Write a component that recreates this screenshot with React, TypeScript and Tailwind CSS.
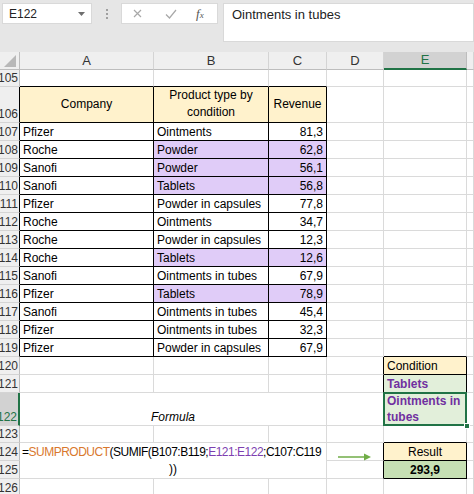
import type { ReactNode } from 'react'

type V = 'end' | 'center'
type H = 'start' | 'center' | 'end'

const vCls: Record<V, string> = { end: 'items-end', center: 'items-center' }
const hCls: Record<H, string> = { start: 'justify-start', center: 'justify-center', end: 'justify-end' }

function Cell({
  r,
  b,
  v = 'end',
  h = 'start',
  cls = '',
  children,
}: {
  r?: boolean
  b?: boolean
  v?: V
  h?: H
  cls?: string
  children?: ReactNode
}) {
  const rc = r ? 'border-r-black' : 'border-r-[#dadada]'
  const bc = b ? 'border-b-black' : 'border-b-[#dadada]'
  return (
    <div
      className={`flex min-w-0 overflow-hidden whitespace-nowrap border-r border-b px-[3px] pb-px text-[12px] leading-[14px] ${rc} ${bc} ${vCls[v]} ${hCls[h]} ${cls}`}
    >
      {children}
    </div>
  )
}

function RowHead({ n, dark, sel }: { n: number; dark?: boolean; sel?: boolean }) {
  const rc = sel
    ? 'border-r-2 border-r-[#217346]'
    : dark
      ? 'border-r border-r-black'
      : 'border-r border-r-[#bdbdbd]'
  const bg = sel ? 'bg-[#d2d2d2] text-[#217346]' : 'bg-[#efefef] text-[#333]'
  return (
    <div
      className={`flex items-end justify-end overflow-hidden border-b border-b-[#d4d4d4] pr-px pb-px text-[12px] leading-[14px] ${rc} ${bg}`}
    >
      <span>{n}</span>
    </div>
  )
}

function ColHead({ label, sel }: { label: string; sel?: boolean }) {
  return sel ? (
    <div className="flex items-center justify-center border-r border-r-[#bdbdbd] border-b-2 border-b-[#217346] bg-[#d2d2d2] text-[13px] text-[#217346]">
      {label}
    </div>
  ) : (
    <div className="flex items-center justify-center border-r border-b border-r-[#d4d4d4] border-b-[#bdbdbd] bg-[#efefef] text-[13px] text-[#333]">
      {label}
    </div>
  )
}

const rows: [number, string, string, string, boolean][] = [
  [107, 'Pfizer', 'Ointments', '81,3', false],
  [108, 'Roche', 'Powder', '62,8', true],
  [109, 'Sanofi', 'Powder', '56,1', true],
  [110, 'Sanofi', 'Tablets', '56,8', true],
  [111, 'Pfizer', 'Powder in capsules', '77,8', false],
  [112, 'Roche', 'Ointments', '34,7', false],
  [113, 'Roche', 'Powder in capsules', '12,3', false],
  [114, 'Roche', 'Tablets', '12,6', true],
  [115, 'Sanofi', 'Ointments in tubes', '67,9', false],
  [116, 'Pfizer', 'Tablets', '78,9', true],
  [117, 'Sanofi', 'Ointments in tubes', '45,4', false],
  [118, 'Pfizer', 'Ointments in tubes', '32,3', false],
  [119, 'Pfizer', 'Powder in capsules', '67,9', false],
]

function Toolbar() {
  return (
    <div className="flex h-[52px] items-start bg-[#e6e6e6] pt-[3px] pl-[2px]">
      <div className="relative flex h-[21px] w-[90px] items-center border border-[#d9d9d9] bg-white pl-[6px] text-[12px] text-[#222]">
        E122
        <svg className="absolute top-[8px] right-[6px]" width="7" height="4" viewBox="0 0 7 4">
          <polygon points="0,0 7,0 3.5,4" fill="#6e6e6e" />
        </svg>
      </div>
      <div className="flex h-[21px] w-[29px] flex-col items-center justify-center gap-[2px]">
        <span className="h-[2px] w-[2px] bg-[#a0a0a0]" />
        <span className="h-[2px] w-[2px] bg-[#a0a0a0]" />
        <span className="h-[2px] w-[2px] bg-[#a0a0a0]" />
      </div>
      <div className="flex h-[21px] w-[97px] items-center border border-[#d9d9d9] bg-white">
        <svg className="ml-[11px]" width="9" height="9" viewBox="0 0 9 9">
          <path d="M1 1 L8 8 M8 1 L1 8" stroke="#a8a8a8" strokeWidth="1.2" fill="none" />
        </svg>
        <svg className="ml-[23px]" width="12" height="10" viewBox="0 0 12 10">
          <path d="M1 5.5 L4.5 9 L11 1" stroke="#a8a8a8" strokeWidth="1.2" fill="none" />
        </svg>
        <span className="ml-[19px] font-['Liberation_Serif',serif] text-[13px] text-[#555] italic">
          f<span className="text-[9px]">x</span>
        </span>
      </div>
      <div className="ml-[5px] h-[39px] flex-1 border border-[#d9d9d9] bg-white pt-[3px] pl-[8px] text-[13px] leading-[16px] text-[#222]">
        Ointments in tubes
      </div>
    </div>
  )
}

export default function App() {
  return (
    <div className="h-[494px] w-[474px] overflow-hidden bg-white font-['Liberation_Sans',Arial,sans-serif] text-black">
      <Toolbar />
      <div className="grid grid-cols-[20px_134px_115px_58px_57px_83px_1fr] grid-rows-[18px_17px_36px_repeat(13,18px)_18px_18px_33px_17px_18px_18px_18px]">
        {/* column headers */}
        <div className="relative border-r border-b border-r-[#bdbdbd] border-b-[#bdbdbd] bg-[#efefef]">
          <svg className="absolute right-[3px] bottom-[2px]" width="12" height="12" viewBox="0 0 12 12">
            <polygon points="12,0 12,12 0,12" fill="#b8b8b8" />
          </svg>
        </div>
        <ColHead label="A" />
        <ColHead label="B" />
        <ColHead label="C" />
        <ColHead label="D" />
        <ColHead label="E" sel />
        <ColHead label="" />

        {/* 105 */}
        <RowHead n={105} />
        <Cell b />
        <Cell b />
        <Cell b />
        <Cell />
        <Cell />
        <Cell />

        {/* 106 */}
        <RowHead n={106} dark />
        <Cell r b v="center" h="center" cls="bg-[#fff2cc]">
          Company
        </Cell>
        <Cell r b v="center" h="center" cls="flex-col bg-[#fff2cc] text-center leading-[17px]">
          <span>Product type by</span>
          <span>condition</span>
        </Cell>
        <Cell r b v="center" h="center" cls="bg-[#fff2cc]">
          Revenue
        </Cell>
        <Cell />
        <Cell />
        <Cell />

        {rows.map(([n, company, type, rev, hl]) => (
          <div key={n} className="contents">
            <RowHead n={n} dark />
            <Cell r b>
              {company}
            </Cell>
            <Cell r b cls={hl ? 'bg-[#e0ccf8]' : ''}>
              {type}
            </Cell>
            <Cell r b h="end" cls={hl ? 'bg-[#e0ccf8]' : ''}>
              {rev}
            </Cell>
            <Cell />
            <Cell b={n === 119} />
            <Cell />
          </div>
        ))}

        {/* 120 */}
        <RowHead n={120} />
        <Cell />
        <Cell />
        <Cell />
        <Cell r />
        <Cell r b cls="bg-[#fff2cc]">
          Condition
        </Cell>
        <Cell />

        {/* 121 */}
        <RowHead n={121} />
        <Cell />
        <Cell />
        <Cell />
        <Cell r />
        <Cell r b cls="bg-[#e2efda] font-bold text-[#7030a0]">
          Tablets
        </Cell>
        <Cell />

        {/* 122 */}
        <RowHead n={122} sel />
        <div className="col-span-3 flex items-end justify-center border-r border-b border-r-[#dadada] border-b-[#dadada] pb-px text-[12px] leading-[14px] italic">
          Formula
        </div>
        <Cell r />
        <div className="relative flex items-end border-r border-b border-r-black border-b-black bg-[#e2efda] px-[3px] text-[12px] leading-[16px] font-bold text-[#7030a0]">
          Ointments in tubes
          <div className="absolute -top-px -left-px -right-px -bottom-px border-2 border-[#217346]" />
          <div className="absolute -right-[4px] -bottom-[4px] h-[6px] w-[6px] border border-white bg-[#217346]" />
        </div>
        <Cell />

        {/* 123 */}
        <RowHead n={123} />
        <Cell />
        <Cell />
        <Cell />
        <Cell />
        <Cell b />
        <Cell />

        {/* 124 */}
        <RowHead n={124} />
        <div className="col-span-3 row-span-2 flex flex-col border-r border-b border-r-[#dadada] border-b-[#dadada] text-[12px] leading-[14px]">
          <div className="flex h-[18px] items-end pb-[2px] pl-[2px] tracking-[-0.5px] whitespace-nowrap">
            =<span className="text-[#d9782d]">SUMPRODUCT</span>(SUMIF(B107:B119;
            <span className="text-[#7d3fb0]">E121:E122</span>;C107:C119
          </div>
          <div className="flex h-[18px] items-end justify-center pb-[2px]">))</div>
        </div>
        <div className="flex items-start border-r border-b border-r-black border-b-[#dadada]">
          <svg className="mt-[10px] ml-[11px]" width="34" height="8" viewBox="0 0 34 8">
            <line x1="0" y1="4" x2="28" y2="4" stroke="#70ad47" strokeWidth="1.5" />
            <polygon points="26,0.5 33,4 26,7.5" fill="#70ad47" />
          </svg>
        </div>
        <Cell r b h="center" cls="bg-[#fff2cc]">
          Result
        </Cell>
        <Cell />

        {/* 125 */}
        <RowHead n={125} />
        <Cell r />
        <Cell r b h="center" cls="bg-[#c6e0b4] font-bold">
          293,9
        </Cell>
        <Cell />

        {/* 126 */}
        <RowHead n={126} />
        <Cell />
        <Cell />
        <Cell />
        <Cell />
        <Cell />
        <Cell />
      </div>
    </div>
  )
}
